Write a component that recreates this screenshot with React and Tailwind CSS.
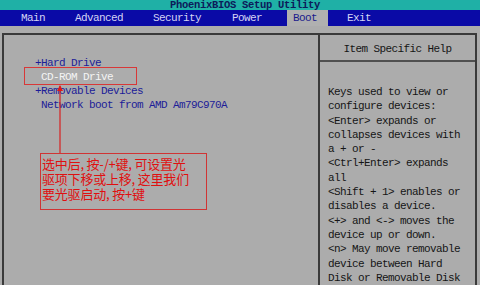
import React from 'react';

const mono = { fontFamily: '"Liberation Mono", "DejaVu Sans Mono", monospace' };

const helpLines = [
  'Keys used to view or',
  'configure devices:',
  '<Enter> expands or',
  'collapses devices with',
  'a + or -',
  '<Ctrl+Enter> expands',
  'all',
  '<Shift + 1> enables or',
  'disables a device.',
  '<+> and <-> moves the',
  'device up or down.',
  '<n> May move removable',
  'device between Hard',
  'Disk or Removable Disk',
];

function Tabs() {
  return (
    <div className="flex h-[16px] items-stretch bg-[#0a0aa6] pl-[21px] text-[11px] leading-[16px] tracking-[-0.6px] text-[#d4d4f4]">
      <span>Main</span>
      <span className="ml-[30px]">Advanced</span>
      <span className="ml-[30px]">Security</span>
      <span className="ml-[31px]">Power</span>
      <span className="ml-[25px] w-[41px] bg-[#b0b0b0] pl-[6px] text-[#1a1a8c]">Boot</span>
      <span className="ml-[19px]">Exit</span>
    </div>
  );
}

export default function App() {
  return (
    <div className="relative h-[285px] w-[480px] overflow-hidden bg-[#acacac]" style={mono}>
      <div className="flex h-[10px] justify-center bg-[#1fb0a6] pl-[10px] text-[10.5px] font-bold leading-[10px] tracking-[-0.3px] text-[#0c1a5a]">
        PhoenixBIOS Setup Utility
      </div>
      <Tabs />

      <div className="px-[2px] pt-[7px]">
        <div className="flex h-[260px] w-[475px] border-l-2 border-r-2 border-t-2 border-[#3a3a3a]">
          <div className="w-[316px] border-r-2 border-[#3a3a3a] pl-[31px] pt-[21px] text-[11px] leading-[14px] tracking-[-0.6px] text-[#1c1c98]">
            <div className="whitespace-pre">+Hard Drive</div>
            <div className="whitespace-pre text-[#f4f4f4]"> CD-ROM Drive</div>
            <div className="whitespace-pre">+Removable Devices</div>
            <div className="whitespace-pre"> Network boot from AMD Am79C970A</div>
          </div>
          <div className="flex flex-1 flex-col">
            <div className="flex h-[27px] items-center justify-center border-b-2 border-[#505050] pt-[3px] text-[11px] tracking-[-0.6px] text-[#151515]">
              Item Specific Help
            </div>
            <div className="pl-[8px] pt-[23px] text-[11px] leading-[14.3px] tracking-[-0.6px] text-[#151515]">
              {helpLines.map((l) => (
                <div key={l} className="whitespace-pre">{l}</div>
              ))}
            </div>
          </div>
        </div>
      </div>

      {/* red annotation */}
      <div className="absolute left-[24px] top-[67px] h-[18px] w-[113px] border border-[#d83838]" />
      <svg className="absolute left-0 top-0" width="480" height="285">
        <line x1="60" y1="86" x2="60" y2="153" stroke="#d82020" strokeWidth="1.2" />
        <path d="M57 91 L60 85 L63 91 Z" fill="#e01818" />
      </svg>
      <div
        className="absolute left-[40px] top-[153px] h-[57px] w-[167px] border border-[#d03434] pl-[1px] pt-[2px] text-[13px] leading-[15px] tracking-[-0.2px] text-[#e01010]"
        style={{ fontFamily: '"Noto Sans CJK SC", sans-serif' }}
      >
        <div>选中后, 按-/+键, 可设置光</div>
        <div>驱项下移或上移, 这里我们</div>
        <div>要光驱启动, 按+键</div>
      </div>
    </div>
  );
}
